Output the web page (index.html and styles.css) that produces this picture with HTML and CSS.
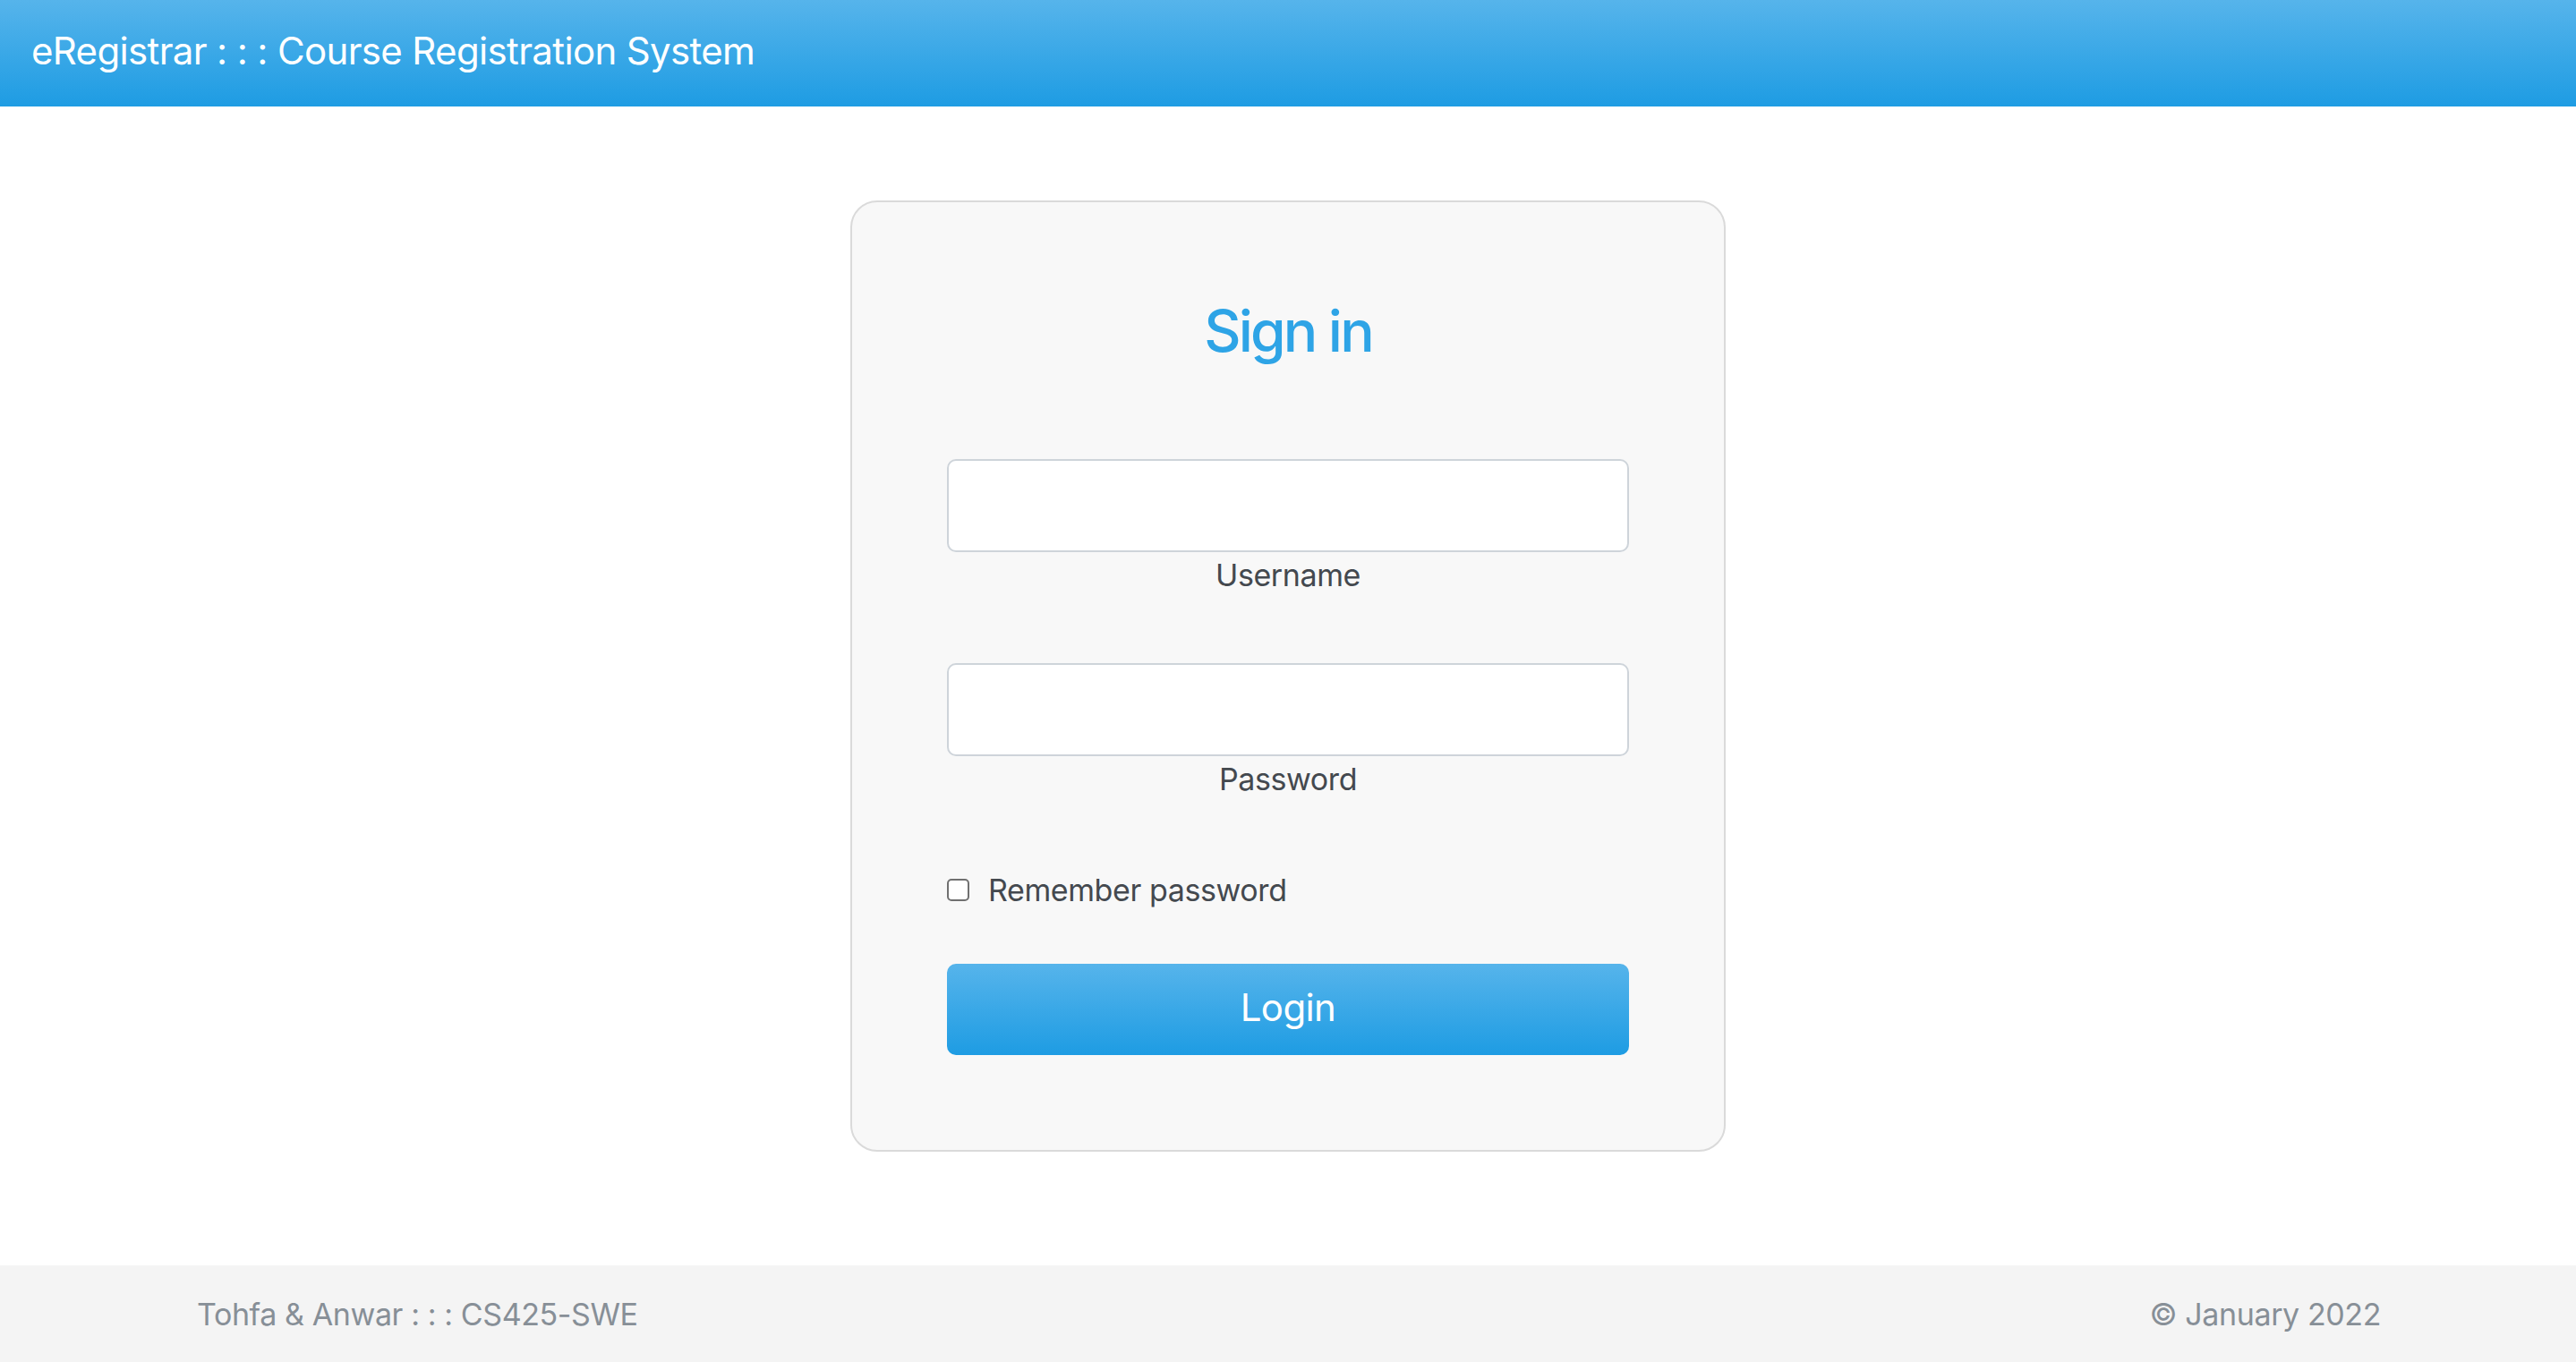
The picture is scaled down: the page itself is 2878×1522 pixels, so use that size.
FILE: index.html
```html
<!DOCTYPE html>
<html lang="en">
<head>
<meta charset="utf-8">
<title>eRegistrar : : : Course Registration System</title>
<link rel="stylesheet" href="styles.css">
</head>
<body>
<header class="topbar">
  <span class="brand">eRegistrar : : : Course Registration System</span>
</header>
<main class="main">
  <form class="card">
    <h2 class="title">Sign in</h2>
    <div class="field">
      <input class="input" type="text" id="username">
      <label class="label" for="username">Username</label>
    </div>
    <div class="field field-pw">
      <input class="input" type="password" id="password">
      <label class="label" for="password">Password</label>
    </div>
    <label class="check">
      <span class="box"></span>
      <span class="check-text">Remember password</span>
    </label>
    <button class="btn" type="button">Login</button>
  </form>
</main>
<footer class="footer">
  <span>Tohfa &amp; Anwar : : : CS425-SWE</span>
  <span>© January 2022</span>
</footer>
</body>
</html>
```
FILE: styles.css
```css
html, body {
  margin: 0;
  padding: 0;
}
body {
  font-family: Inter, "Noto Sans", "Liberation Sans", sans-serif;
  background: #ffffff;
  min-height: 100vh;
  display: flex;
  flex-direction: column;
}
.topbar {
  height: 119px;
  background: linear-gradient(to bottom, #56b4eb, #1e9ce3);
  display: flex;
  align-items: center;
  padding: 0 35px;
  box-sizing: border-box;
}
.brand {
  color: #ffffff;
  font-size: 42px;
  letter-spacing: -0.65px;
  line-height: 1;
  margin-top: -6px;
}
.main {
  display: flex;
  justify-content: center;
  padding-top: 105px;
}
.card {
  width: 978px;
  box-sizing: border-box;
  background: #f8f8f8;
  border: 2px solid #dadada;
  border-radius: 30px;
  padding: 105px 106px 106px;
  display: flex;
  flex-direction: column;
}
.title {
  margin: 0;
  font-size: 64px;
  font-weight: 500;
  line-height: 77px;
  color: #2ea4e6;
  text-align: center;
  letter-spacing: -2.8px;
}
.field {
  display: flex;
  flex-direction: column;
  margin-top: 105px;
}
.field-pw {
  margin-top: 74px;
}
.input {
  height: 104px;
  box-sizing: border-box;
  border: 2px solid #ced4da;
  border-radius: 10px;
  background: #ffffff;
  margin: 0;
  font-size: 32px;
  padding: 0 24px;
  outline: none;
}
.label {
  margin-top: 2px;
  font-size: 34px;
  line-height: 48px;
  color: #44494f;
  text-align: center;
  letter-spacing: -0.4px;
}
.check {
  margin-top: 76px;
  display: flex;
  align-items: center;
  height: 48px;
}
.box {
  width: 25px;
  height: 25px;
  box-sizing: border-box;
  border: 2px solid #707070;
  border-radius: 5px;
  background: #ffffff;
  margin-right: 21px;
  margin-top: -2px;
}
.check-text {
  font-size: 34px;
  line-height: 48px;
  color: #44494f;
  letter-spacing: -0.4px;
}
.btn {
  margin-top: 58px;
  height: 102px;
  border: none;
  border-radius: 10px;
  background: linear-gradient(to bottom, #56b4eb, #1e9ce3);
  color: #ffffff;
  font-family: Inter, "Noto Sans", "Liberation Sans", sans-serif;
  font-size: 42px;
  letter-spacing: -0.6px;
  padding: 0 0 6px;
}
.footer {
  margin-top: auto;
  height: 108px;
  background: #f4f4f4;
  display: flex;
  justify-content: space-between;
  align-items: center;
  padding: 0 218px 0 220px;
  box-sizing: border-box;
  color: #878f97;
  font-size: 34px;
  letter-spacing: -0.4px;
}
```
